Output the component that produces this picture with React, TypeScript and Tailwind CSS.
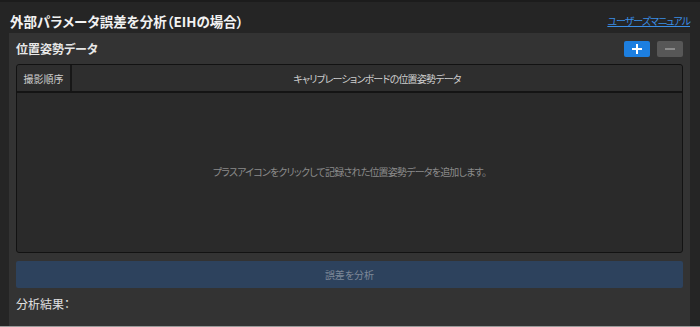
import React from 'react'

const jp = "font-['Noto_Sans_CJK_JP','Noto_Sans',sans-serif] [font-feature-settings:'palt']"

const App: React.FC = () => {
    return (
        <div className={`w-[700px] h-[327px] bg-[#252525] border-t-2 border-t-[#1c1c1c] border-b border-b-[#9a9a9a] flex flex-col overflow-hidden ${jp}`}>
            <div className='flex items-end justify-between pl-[10px] pr-[10px] h-[31px] pb-[5px]'>
                <h1 className='text-[13.5px] font-bold text-[#f2f2f2] leading-none'>外部パラメータ誤差を分析（EIHの場合）</h1>
                <a className='text-[10px] tracking-[-1px] text-[#3a8ee6] underline leading-none mb-[2px]'>ユーザーズマニュアル</a>
            </div>
            <div className='ml-[9px] mr-[10px] flex-1 bg-[#333333] px-[7px] pt-[7px] flex flex-col'>
                <div className='flex items-center justify-between h-[17px]'>
                    <span className='text-[12px] font-bold text-[#e8e8e8] leading-none'>位置姿勢データ</span>
                    <div className='flex gap-[7px]'>
                        <button className='w-[26px] h-[16px] rounded-[2px] bg-[#1d7fe0] flex items-center justify-center'>
                            <svg width="12" height="12" viewBox="0 0 12 12">
                                <path d="M6 1v10M1 6h10" stroke="#ffffff" strokeWidth="2" />
                            </svg>
                        </button>
                        <button className='w-[26px] h-[16px] rounded-[2px] bg-[#575757] flex items-center justify-center'>
                            <svg width="12" height="12" viewBox="0 0 12 12">
                                <path d="M1 6h10" stroke="#8a8a8a" strokeWidth="2" />
                            </svg>
                        </button>
                    </div>
                </div>
                <div className='mt-[7px] h-[189px] rounded-[3px] border border-[#121212] bg-[#2a2a2a] flex flex-col'>
                    <div className='flex h-[28px] border-b-2 border-[#141414] bg-[#2e2e2e] rounded-t-[3px]'>
                        <div className='w-[55px] border-r-2 border-[#171717] flex items-center justify-center text-[10px] text-[#cfcfcf]'>撮影順序</div>
                        <div className='flex-1 flex items-center justify-center text-[10px] tracking-[-0.8px] text-[#cfcfcf]'>キャリブレーションボードの位置姿勢データ</div>
                    </div>
                    <div className='flex-1 flex items-center justify-center text-[10px] tracking-[-0.8px] text-[#8a8a8a] pb-[2px]'>
                        プラスアイコンをクリックして記録された位置姿勢データを追加します。
                    </div>
                </div>
                <button className='mt-[8px] h-[27px] rounded-[2px] bg-[#2d425d] text-[10px] text-[#7d8898] flex items-center justify-center'>誤差を分析</button>
                <div className='mt-[10px] text-[12px] text-[#e0e0e0] leading-none'>分析結果：</div>
            </div>
        </div>
    )
}

export default App
